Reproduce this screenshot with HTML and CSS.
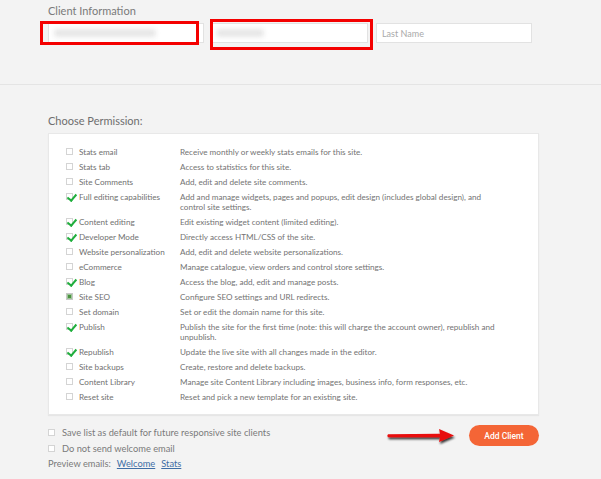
FILE: index.html
```html
<!DOCTYPE html>
<html>
<head>
<meta charset="utf-8">
<link rel="stylesheet" href="styles.css">
</head>
<body>
<div class="page">
  <section class="client-info">
    <div class="section-title">Client Information</div>
    <div class="inputs">
      <div class="field"><span class="blur blur-long"></span></div>
      <div class="field"><span class="blur blur-short"></span></div>
      <div class="field placeholder">Last Name</div>
    </div>
    <div class="mark mark-1"></div>
    <div class="mark mark-2"></div>
  </section>

  <section class="perms">
    <div class="perm-title">Choose Permission:</div>
    <div class="panel">
      <div class="row"><span class="cb"></span><span class="label">Stats email</span><span class="desc">Receive monthly or weekly stats emails for this site.</span></div>
      <div class="row"><span class="cb"></span><span class="label">Stats tab</span><span class="desc">Access to statistics for this site.</span></div>
      <div class="row"><span class="cb"></span><span class="label">Site Comments</span><span class="desc">Add, edit and delete site comments.</span></div>
      <div class="row"><span class="cb checked"></span><span class="label">Full editing capabilities</span><span class="desc">Add and manage widgets, pages and popups, edit design (includes global design), and control site settings.</span></div>
      <div class="row"><span class="cb checked"></span><span class="label">Content editing</span><span class="desc">Edit existing widget content (limited editing).</span></div>
      <div class="row"><span class="cb checked"></span><span class="label">Developer Mode</span><span class="desc">Directly access HTML/CSS of the site.</span></div>
      <div class="row"><span class="cb"></span><span class="label">Website personalization</span><span class="desc">Add, edit and delete website personalizations.</span></div>
      <div class="row"><span class="cb"></span><span class="label">eCommerce</span><span class="desc">Manage catalogue, view orders and control store settings.</span></div>
      <div class="row"><span class="cb checked"></span><span class="label">Blog</span><span class="desc">Access the blog, add, edit and manage posts.</span></div>
      <div class="row"><span class="cb filled"></span><span class="label">Site SEO</span><span class="desc">Configure SEO settings and URL redirects.</span></div>
      <div class="row"><span class="cb"></span><span class="label">Set domain</span><span class="desc">Set or edit the domain name for this site.</span></div>
      <div class="row"><span class="cb checked"></span><span class="label">Publish</span><span class="desc">Publish the site for the first time (note: this will charge the account owner), republish and unpublish.</span></div>
      <div class="row"><span class="cb checked"></span><span class="label">Republish</span><span class="desc">Update the live site with all changes made in the editor.</span></div>
      <div class="row"><span class="cb"></span><span class="label">Site backups</span><span class="desc">Create, restore and delete backups.</span></div>
      <div class="row"><span class="cb"></span><span class="label">Content Library</span><span class="desc">Manage site Content Library including images, business info, form responses, etc.</span></div>
      <div class="row"><span class="cb"></span><span class="label">Reset site</span><span class="desc">Reset and pick a new template for an existing site.</span></div>
    </div>

    <div class="footer">
      <div class="options">
        <div class="opt"><span class="cb small"></span>Save list as default for future responsive site clients</div>
        <div class="opt"><span class="cb small"></span>Do not send welcome email</div>
        <div class="opt preview">Preview emails: <a href="#">Welcome</a> <a href="#">Stats</a></div>
      </div>
      <button class="add-btn">Add Client</button>
      <svg class="arrow" width="76" height="20" viewBox="0 0 76 20">
        <defs>
          <filter id="sh" x="-20%" y="-50%" width="140%" height="200%">
            <feGaussianBlur in="SourceAlpha" stdDeviation="1"/>
            <feOffset dx="1" dy="1.5"/>
            <feComponentTransfer><feFuncA type="linear" slope="0.8"/></feComponentTransfer>
            <feMerge><feMergeNode/><feMergeNode in="SourceGraphic"/></feMerge>
          </filter>
        </defs>
        <path d="M2 8.3 L54 7.8 L53 3 L68 9.5 L53 16 L54 11.2 L2 11.2 Q0.5 9.8 2 8.3 Z" fill="#e8100c" filter="url(#sh)"/>
      </svg>
    </div>
  </section>
</div>
</body>
</html>
```
FILE: styles.css
```css
* { box-sizing: border-box; }
html, body { margin: 0; padding: 0; }
body {
  background: #f3f3f3;
  font-family: Lato, "Open Sans", "Liberation Sans", sans-serif;
  color: #707070;
}
.page { width: 601px; height: 479px; overflow: hidden; }

.client-info {
  position: relative;
  height: 85px;
  border-bottom: 1px solid #e4e4e4;
  padding: 4px 0 0 48px;
}
.section-title {
  font-size: 11px;
  line-height: 13px;
  color: #7a7a7a;
}
.inputs {
  display: flex;
  gap: 8px;
  margin-top: 6px;
}
.field {
  width: 156px;
  height: 20px;
  background: #fff;
  border: 1px solid #e2e2e2;
  display: flex;
  align-items: center;
  padding-left: 5px;
}
.placeholder {
  font-size: 9px;
  color: #a9a9a9;
}
.blur {
  display: block;
  height: 8px;
  background: #e6e6e6;
  filter: blur(2.5px);
  border-radius: 3px;
}
.blur-long { width: 102px; }
.blur-short { width: 48px; margin-left: -2px; }

.mark {
  position: absolute;
  border: 3px solid #f40000;
}
.mark-1 { left: 40px; top: 21px; width: 159px; height: 24px; }
.mark-2 { left: 210px; top: 19px; width: 163px; height: 31px; }

.perms { padding: 0 62px 0 48px; }
.perm-title {
  font-size: 11px;
  line-height: 14px;
  margin-top: 29px;
  color: #6e6e6e;
}
.panel {
  margin-top: 5px;
  background: #fff;
  border: 1px solid #e8e8e8;
  box-shadow: 0 1px 1px rgba(0,0,0,0.05);
  padding: 10px 40px 10px 17px;
}
.row {
  display: grid;
  grid-template-columns: 13px 101px 1fr;
  padding: 2.5px 0;
  font-size: 8.15px;
  line-height: 10px;
  color: #737373;
}
.label { color: #707070; }
.cb {
  position: relative;
  width: 7px;
  height: 7px;
  margin-top: 1.5px;
  border: 1px solid #d4d4d4;
  background: #fff;
}
.cb.checked::after {
  content: "";
  position: absolute;
  left: 1.5px;
  top: -2.5px;
  width: 3.5px;
  height: 7px;
  border-right: 2px solid #1fae3c;
  border-bottom: 2px solid #1fae3c;
  transform: rotate(40deg);
}
.cb.filled {
  border-color: #c8c8c8;
  background: #4a9140;
  box-shadow: inset 0 0 0 1px #9cc496;
}

.footer {
  position: relative;
  display: flex;
  justify-content: space-between;
  align-items: flex-start;
  margin-top: 10px;
}
.options { font-size: 9.3px; color: #7a7a7a; }
.opt {
  display: flex;
  align-items: center;
  height: 15.5px;
}
.cb.small { margin: 0 7px 0 0; width: 7px; height: 7px; }
.preview a {
  color: #3f6ea6;
  text-decoration: underline;
  margin-left: 6px;
}
.add-btn {
  width: 70px;
  height: 21px;
  border: none;
  border-radius: 11px;
  background: #f46536;
  color: #fff;
  font-family: Roboto, "Liberation Sans", sans-serif;
  font-size: 8.5px;
  font-weight: 500;
  padding: 0;
}
.arrow {
  position: absolute;
  left: 338px;
  top: 1px;
}
```
